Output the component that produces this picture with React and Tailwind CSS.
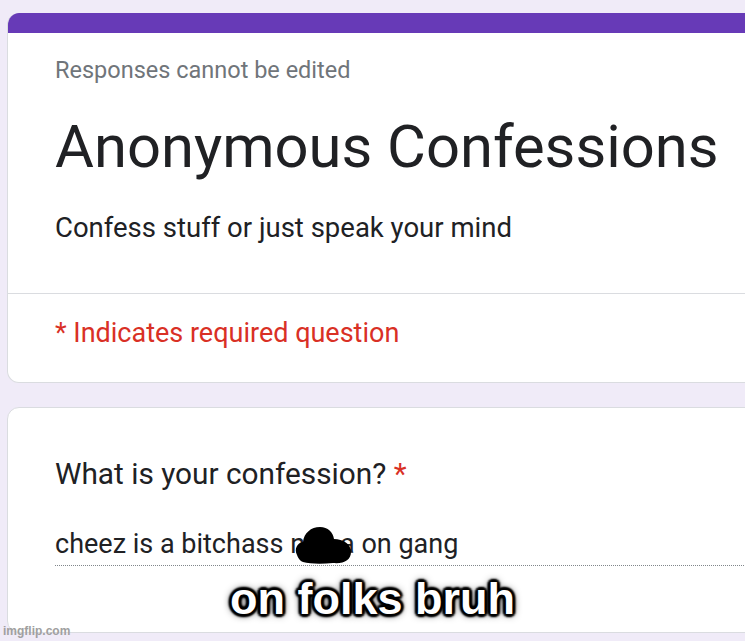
export default function App() {
    const roboto = { fontFamily: 'Roboto, "Noto Sans", sans-serif' }

    return (
        <div className="relative w-[745px] h-[641px] overflow-hidden bg-[#f0ebf8]" style={roboto}>
            <div className="flex flex-col gap-[24px] pl-[7px] pt-[13px]">
                {/* header card */}
                <div className="w-[800px] rounded-[12px] bg-white border border-t-0 border-[#dadce0] overflow-hidden">
                    <div className="h-[20px] bg-[#673ab7]"></div>
                    <div className="pl-[47px] pt-[23px] pb-[48px]">
                        <div className="text-[23.5px] leading-[28px] text-[#70757a]">Responses cannot be edited</div>
                        <div className="mt-[28px] text-[59.7px] leading-[70px] text-[#202124]">Anonymous Confessions</div>
                        <div className="mt-[29px] text-[27.5px] leading-[34px] text-[#202124]">Confess stuff or just speak your mind</div>
                    </div>
                    <div className="h-px bg-[#dadce0]"></div>
                    <div className="pl-[47px] pt-[22px] pb-[32px] text-[27px] leading-[34px] text-[#d93025]">
                        * Indicates required question
                    </div>
                </div>

                {/* question card */}
                <div className="w-[800px] h-[226px] rounded-[12px] bg-white border border-[#dadce0] pl-[47px] pt-[48px]">
                    <div className="text-[29.8px] leading-[36px] text-[#202124]">
                        What is your confession? <span className="text-[#d93025]">*</span>
                    </div>
                    <div className="relative mt-[35px] pb-[4px] border-b border-dotted border-[#80868b] text-[27px] leading-[34px] text-[#202124]">
                        cheez is a bitchass n<span className="inline-block w-[35px]"></span>a on gang
                        <svg className="absolute left-[239px] top-[0px]" width="58" height="37" viewBox="0 0 58 37">
                            <path d="M3 28 C0 22 3 16 9 15 C10 6 17 0 26 0 C34 0 39 5 40 12 C49 12 57 17 57 25 C57 33 50 37 39 36 C28 37 16 37 9 35 C6 34 4 31 3 28 Z" fill="#000" />
                        </svg>
                    </div>
                </div>
            </div>

            {/* meme caption */}
            <div
                className="absolute left-0 right-0 top-[574px] text-center text-white font-bold text-[45px] leading-[50px] [text-shadow:2px_2px_2px_#000,-2px_-2px_2px_#000,2px_-2px_2px_#000,-2px_2px_2px_#000,0_3px_2px_#000,0_-3px_2px_#000,3px_0_2px_#000,-3px_0_2px_#000,0_0_8px_#000]"
                style={{ fontFamily: '"Liberation Sans", Arial, sans-serif' }}
            >
                on folks bruh
            </div>

            <div
                className="absolute left-[3px] top-[624px] text-[12px] leading-[14px] font-bold text-[#a0a0a0]"
                style={{ fontFamily: '"Liberation Sans", Arial, sans-serif' }}
            >
                imgflip.com
            </div>
        </div>
    )
}
